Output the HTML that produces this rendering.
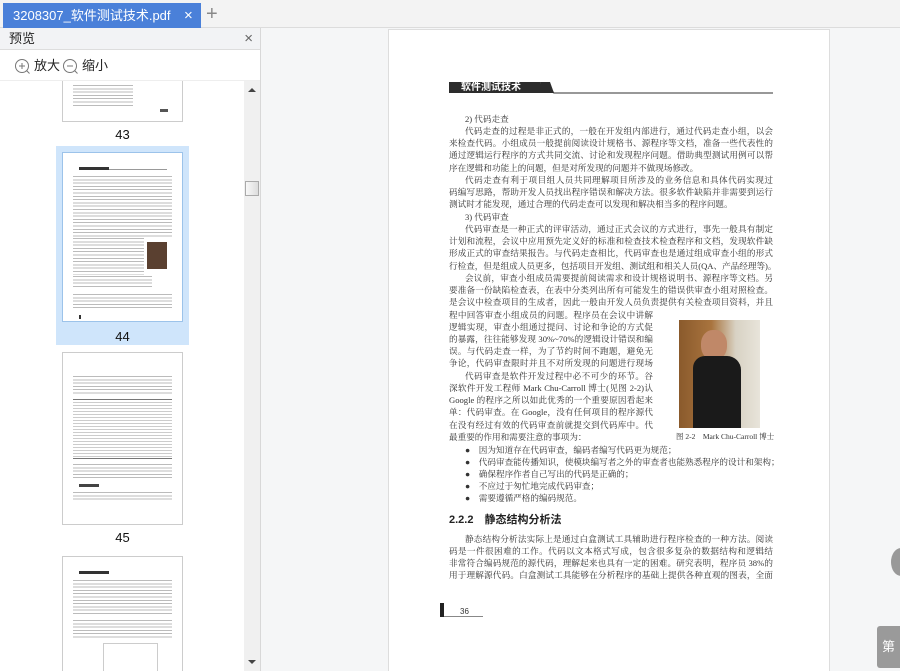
<!DOCTYPE html>
<html><head><meta charset="utf-8"><style>
*{margin:0;padding:0;box-sizing:border-box}
body{width:900px;height:671px;overflow:hidden;background:#f5f6f7;font-family:"Liberation Sans","Noto Sans CJK SC",sans-serif;position:relative}
.abs{position:absolute}
#tabbar{left:0;top:0;width:900px;height:28px;background:#f3f3f3;border-bottom:1px solid #dcdcdc}
#tab{left:3px;top:3px;width:198px;height:25px;background:#4a80d9;color:#fff;font-size:13px;line-height:25px;padding-left:10px;white-space:nowrap}
#side{left:0;top:28px;width:261px;height:643px;background:#fff;border-right:1px solid #d8d8d8}
#sh{left:0;top:0;width:260px;height:22px;background:#f2f3f5;border-bottom:1px solid #ddd;font-size:13px;line-height:22px;padding-left:9px;color:#222}
#zr{left:0;top:22px;width:260px;height:31px;font-size:13px;line-height:31px;color:#222;border-bottom:1px solid #eee}
.thumb{position:absolute;left:62px;width:121px;background:#fff;border:1px solid #ccc}
.tl{position:absolute;left:10px;right:10px;background:repeating-linear-gradient(#fff 0,#fff 1px,#bbb 1px,#bbb 2px,#fff 2px,#fff 3.3px)}
.num{position:absolute;width:133px;left:56px;text-align:center;font-size:13px;color:#111}
#sb{left:244px;top:53px;width:16px;height:590px;background:#f0f0f0}
#page{left:388px;top:29px;width:442px;height:642px;background:#fff;border:1px solid #ddd;border-bottom:none}
.t{position:absolute;font-family:"Liberation Serif","Noto Serif CJK SC",serif;font-size:8.6px;color:#333;white-space:nowrap;line-height:12px}
.j{text-align:justify;text-align-last:justify;white-space:normal;overflow:hidden;height:12px}
</style></head><body>
<div id="tabbar" class="abs"></div>
<div id="tab" class="abs">3208307_软件测试技术.pdf<span style="position:absolute;left:181px;top:0;font-size:15px">×</span></div>
<div class="abs" style="left:206px;top:2px;font-size:20px;color:#888;line-height:24px">+</div>
<div id="side" class="abs">
 <div id="sh" class="abs">预览<span style="position:absolute;right:7px;color:#666;font-size:15px">×</span></div>
 <div id="zr" class="abs">
  <svg class="abs" style="left:14px;top:8px" width="16" height="16"><circle cx="8" cy="8" r="6.5" fill="none" stroke="#777"/><path d="M5 8h6M8 5v6M12.5 12.5l3 3" stroke="#777"/></svg>
  <span class="abs" style="left:34px">放大</span>
  <svg class="abs" style="left:62px;top:8px" width="16" height="16"><circle cx="8" cy="8" r="6.5" fill="none" stroke="#777"/><path d="M5 8h6M12.5 12.5l3 3" stroke="#777"/></svg>
  <span class="abs" style="left:82px">缩小</span>
 </div>
 <div class="abs" style="left:0;top:53px;width:244px;height:590px;overflow:hidden">
  <div class="thumb" style="top:-20px;height:61px"><div class="tl" style="top:22px;height:22px;width:60px"></div><div style="position:absolute;right:14px;top:47px;width:8px;height:3px;background:#555"></div></div>
  <div class="num" style="top:46px">43</div>
  <div class="abs" style="left:56px;top:65px;width:133px;height:199px;background:#cfe5fb"></div>
  <div class="thumb" style="top:71px;height:170px;border-color:#9cc3ea">
   <div class="abs" style="left:16px;top:14px;width:30px;height:3px;background:#333"></div>
   <div class="abs" style="left:46px;top:16px;width:58px;height:1px;background:#999"></div>
   <div class="tl" style="top:22px;height:62px"></div>
   <div class="tl" style="top:84px;height:38px;right:38px"></div>
   <div class="abs" style="left:84px;top:89px;width:20px;height:27px;background:#5a4030"></div>
   <div class="tl" style="top:122px;height:14px;right:30px"></div>
   <div class="tl" style="top:140px;height:16px"></div>
   <div class="abs" style="left:16px;top:162px;width:2px;height:4px;background:#333"></div>
  </div>
  <div class="num" style="top:248px">44</div>
  <div class="thumb" style="top:271px;height:173px">
   <div class="tl" style="top:22px;height:20px"></div>
   <div class="abs" style="left:10px;right:10px;top:46px;height:60px;border-top:1px solid #777;border-bottom:1px solid #777;background:repeating-linear-gradient(#fff 0,#fff 2px,#ccc 2px,#ccc 3px)"></div>
   <div class="tl" style="top:110px;height:16px"></div>
   <div class="abs" style="left:16px;top:131px;width:20px;height:3px;background:#444"></div>
   <div class="tl" style="top:138px;height:10px"></div>
  </div>
  <div class="num" style="top:449px">45</div>
  <div class="thumb" style="top:475px;height:130px">
   <div class="abs" style="left:16px;top:14px;width:30px;height:3px;background:#333"></div>
   <div class="tl" style="top:22px;height:36px"></div>
   <div class="tl" style="top:62px;height:20px"></div>
   <div class="abs" style="left:40px;top:86px;width:55px;height:40px;border:1px solid #ccc"></div>
  </div>
 </div>
 <div id="sb" class="abs">
  <div class="abs" style="left:4px;top:7px;border:4px solid transparent;border-bottom:4px solid #444;border-top:none;width:0"></div>
  <div class="abs" style="left:1px;top:100px;width:14px;height:15px;border:1px solid #aaa;background:linear-gradient(90deg,#f8f8f8,#ddd)"></div>
  <div class="abs" style="left:4px;top:579px;border:4px solid transparent;border-top:4px solid #444;border-bottom:none;width:0"></div>
 </div>
</div>
<div id="page" class="abs"></div>
<div class="abs" style="left:449px;top:82px;width:96px;height:11px;background:#2c2c2c;color:#fff;font-size:10px;line-height:11px;padding-left:12px;font-weight:bold">软件测试技术</div>
<svg class="abs" style="left:540px;top:82px" width="234" height="13"><path d="M0 0L14 11H233" stroke="#777" fill="none" stroke-width="1.5"/><path d="M0 0L10 0L14 11L5 11Z" fill="#2c2c2c"/></svg>
<div class="t" style="left:465px;top:113px">2) 代码走查</div>
<div class="t j" style="left:465px;top:125px;width:308px">代码走查的过程是非正式的，一般在开发组内部进行，通过代码走查小组，以会议的方式</div>
<div class="t j" style="left:449px;top:137px;width:324px">来检查代码。小组成员一般提前阅读设计规格书、源程序等文档，准备一些代表性的测试用例，</div>
<div class="t j" style="left:449px;top:149px;width:324px">通过逻辑运行程序的方式共同交流、讨论和发现程序问题。借助典型测试用例可以帮助发现程</div>
<div class="t" style="left:449px;top:162px">序在逻辑和功能上的问题，但是对所发现的问题并不做现场修改。</div>
<div class="t j" style="left:465px;top:174px;width:308px">代码走查有利于项目组人员共同理解项目所涉及的业务信息和具体代码实现过程，交换代</div>
<div class="t j" style="left:449px;top:186px;width:324px">码编写思路，帮助开发人员找出程序错误和解决方法。很多软件缺陷并非需要到运行程序进行</div>
<div class="t" style="left:449px;top:198px">测试时才能发现，通过合理的代码走查可以发现和解决相当多的程序问题。</div>
<div class="t" style="left:465px;top:211px">3) 代码审查</div>
<div class="t j" style="left:465px;top:223px;width:308px">代码审查是一种正式的评审活动，通过正式会议的方式进行，事先一般具有制定好的会议</div>
<div class="t j" style="left:449px;top:235px;width:324px">计划和流程，会议中应用预先定义好的标准和检查技术检查程序和文档，发现软件缺陷，会后</div>
<div class="t j" style="left:449px;top:247px;width:324px">形成正式的审查结果报告。与代码走查相比，代码审查也是通过组成审查小组的形式对程序进</div>
<div class="t" style="left:449px;top:260px">行检查，但是组成人员更多，包括项目开发组、测试组和相关人员(QA、产品经理等)。</div>
<div class="t j" style="left:465px;top:272px;width:308px">会议前，审查小组成员需要提前阅读需求和设计规格说明书、源程序等文档。另外，还需</div>
<div class="t j" style="left:449px;top:284px;width:324px">要准备一份缺陷检查表，在表中分类列出所有可能发生的错误供审查小组对照检查。开发人员</div>
<div class="t j" style="left:449px;top:296px;width:324px">是会议中检查项目的生成者，因此一般由开发人员负责提供有关检查项目资料，并且在会议过</div>
<div class="t j" style="left:449px;top:309px;width:204px">程中回答审查小组成员的问题。程序员在会议中讲解程序的</div>
<div class="t j" style="left:449px;top:321px;width:204px">逻辑实现，审查小组通过提问、讨论和争论的方式促进问题</div>
<div class="t j" style="left:449px;top:333px;width:204px">的暴露，往往能够发现 30%~70%的逻辑设计错误和编码错</div>
<div class="t j" style="left:449px;top:345px;width:204px">误。与代码走查一样，为了节约时间不跑题，避免无休止的</div>
<div class="t j" style="left:449px;top:357px;width:204px">争论，代码审查限时并且不对所发现的问题进行现场修改。</div>
<div class="t j" style="left:465px;top:370px;width:188px">代码审查是软件开发过程中必不可少的环节。谷歌前资</div>
<div class="t j" style="left:449px;top:382px;width:204px">深软件开发工程师 Mark Chu-Carroll 博士(见图 2-2)认为，</div>
<div class="t j" style="left:449px;top:394px;width:204px">Google 的程序之所以如此优秀的一个重要原因看起来很简</div>
<div class="t j" style="left:449px;top:406px;width:204px">单：代码审查。在 Google，没有任何项目的程序源代码可以</div>
<div class="t j" style="left:449px;top:419px;width:204px">在没有经过有效的代码审查前就提交到代码库中。代码审查</div>
<div class="t" style="left:449px;top:431px">最重要的作用和需要注意的事项为：</div>
<div class="abs" style="left:679px;top:320px;width:81px;height:108px;background:linear-gradient(90deg,#8a5a2c 0,#a9743e 40%,#d8d2c4 70%,#e8e4da 100%)">
 <div class="abs" style="left:22px;top:10px;width:26px;height:30px;border-radius:45%;background:#c08868"></div>
 <div class="abs" style="left:14px;top:36px;width:48px;height:72px;border-radius:12px 14px 0 0;background:#1a1a1a"></div>
</div>
<div class="t" style="left:676px;top:431px;font-size:7.5px">图 2-2　Mark Chu-Carroll 博士</div>
<div class="t" style="left:465px;top:444px">●　因为知道存在代码审查，编码者编写代码更为规范；</div>
<div class="t" style="left:465px;top:456px">●　代码审查能传播知识，使模块编写者之外的审查者也能熟悉程序的设计和架构；</div>
<div class="t" style="left:465px;top:468px">●　确保程序作者自己写出的代码是正确的；</div>
<div class="t" style="left:465px;top:480px">●　不应过于匆忙地完成代码审查；</div>
<div class="t" style="left:465px;top:492px">●　需要遵循严格的编码规范。</div>
<div class="abs" style="left:449px;top:511px;font-size:11px;font-weight:bold;color:#222;white-space:nowrap">2.2.2　静态结构分析法</div>
<div class="t j" style="left:465px;top:533px;width:308px">静态结构分析法实际上是通过白盒测试工具辅助进行程序检查的一种方法。阅读和理解代</div>
<div class="t j" style="left:449px;top:545px;width:324px">码是一件很困难的工作。代码以文本格式写成，包含很多复杂的数据结构和逻辑结构，即使是</div>
<div class="t j" style="left:449px;top:557px;width:324px">非常符合编码规范的源代码，理解起来也具有一定的困难。研究表明，程序员 38%的时间都被</div>
<div class="t j" style="left:449px;top:569px;width:324px">用于理解源代码。白盒测试工具能够在分析程序的基础上提供各种直观的图表，全面详细地展</div>
<div class="abs" style="left:440px;top:603px;width:4px;height:14px;background:#222"></div>
<div class="abs" style="left:444px;top:616px;width:39px;height:1px;background:#888"></div>
<div class="abs" style="left:460px;top:607px;font-size:8px;color:#333">36</div>
<div class="abs" style="left:891px;top:548px;width:20px;height:28px;border-radius:50%;background:#999"></div>
<div class="abs" style="left:877px;top:626px;width:24px;height:42px;border-radius:3px 0 0 3px;background:#9a9a9a;color:#fff;font-size:13px;line-height:42px;padding-left:5px">第</div>
</body></html>
